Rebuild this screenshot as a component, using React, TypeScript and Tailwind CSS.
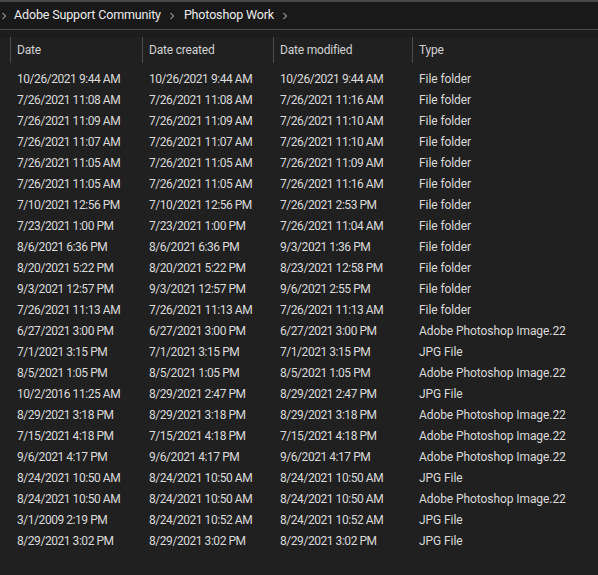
const rows: [string, string, string, string][] = [
  ["10/26/2021 9:44 AM", "10/26/2021 9:44 AM", "10/26/2021 9:44 AM", "File folder"],
  ["7/26/2021 11:08 AM", "7/26/2021 11:08 AM", "7/26/2021 11:16 AM", "File folder"],
  ["7/26/2021 11:09 AM", "7/26/2021 11:09 AM", "7/26/2021 11:10 AM", "File folder"],
  ["7/26/2021 11:07 AM", "7/26/2021 11:07 AM", "7/26/2021 11:10 AM", "File folder"],
  ["7/26/2021 11:05 AM", "7/26/2021 11:05 AM", "7/26/2021 11:09 AM", "File folder"],
  ["7/26/2021 11:05 AM", "7/26/2021 11:05 AM", "7/26/2021 11:16 AM", "File folder"],
  ["7/10/2021 12:56 PM", "7/10/2021 12:56 PM", "7/26/2021 2:53 PM", "File folder"],
  ["7/23/2021 1:00 PM", "7/23/2021 1:00 PM", "7/26/2021 11:04 AM", "File folder"],
  ["8/6/2021 6:36 PM", "8/6/2021 6:36 PM", "9/3/2021 1:36 PM", "File folder"],
  ["8/20/2021 5:22 PM", "8/20/2021 5:22 PM", "8/23/2021 12:58 PM", "File folder"],
  ["9/3/2021 12:57 PM", "9/3/2021 12:57 PM", "9/6/2021 2:55 PM", "File folder"],
  ["7/26/2021 11:13 AM", "7/26/2021 11:13 AM", "7/26/2021 11:13 AM", "File folder"],
  ["6/27/2021 3:00 PM", "6/27/2021 3:00 PM", "6/27/2021 3:00 PM", "Adobe Photoshop Image.22"],
  ["7/1/2021 3:15 PM", "7/1/2021 3:15 PM", "7/1/2021 3:15 PM", "JPG File"],
  ["8/5/2021 1:05 PM", "8/5/2021 1:05 PM", "8/5/2021 1:05 PM", "Adobe Photoshop Image.22"],
  ["10/2/2016 11:25 AM", "8/29/2021 2:47 PM", "8/29/2021 2:47 PM", "JPG File"],
  ["8/29/2021 3:18 PM", "8/29/2021 3:18 PM", "8/29/2021 3:18 PM", "Adobe Photoshop Image.22"],
  ["7/15/2021 4:18 PM", "7/15/2021 4:18 PM", "7/15/2021 4:18 PM", "Adobe Photoshop Image.22"],
  ["9/6/2021 4:17 PM", "9/6/2021 4:17 PM", "9/6/2021 4:17 PM", "Adobe Photoshop Image.22"],
  ["8/24/2021 10:50 AM", "8/24/2021 10:50 AM", "8/24/2021 10:50 AM", "JPG File"],
  ["8/24/2021 10:50 AM", "8/24/2021 10:50 AM", "8/24/2021 10:50 AM", "Adobe Photoshop Image.22"],
  ["3/1/2009 2:19 PM", "8/24/2021 10:52 AM", "8/24/2021 10:52 AM", "JPG File"],
  ["8/29/2021 3:02 PM", "8/29/2021 3:02 PM", "8/29/2021 3:02 PM", "JPG File"],
];

const headers = ["Date", "Date created", "Date modified", "Type"];
const widths = ["w-[132px]", "w-[131px]", "w-[139px]", "w-[170px]"];

const Chevron = () => (
  <svg width="8" height="8" viewBox="0 0 8 8" className="text-[#8c8c8c]">
    <path d="M2.5 1 L5.5 4 L2.5 7" fill="none" stroke="currentColor" strokeWidth="1.1" />
  </svg>
);

export default function App() {
  return (
    <div className="w-[598px] h-[575px] bg-[#202020] text-[#dadada] flex flex-col overflow-hidden font-['Roboto',sans-serif]">
      <div className="h-[2px] bg-[#474747]" />
      <div className="h-[27px] bg-[#191919] flex items-center text-[12.5px] tracking-[-0.15px] text-[#ececec]">
        <span className="w-[14px] flex justify-start"><Chevron /></span>
        <span>Adobe Support Community</span>
        <span className="w-[23px] flex justify-center"><Chevron /></span>
        <span>Photoshop Work</span>
        <span className="w-[23px] flex justify-center"><Chevron /></span>
      </div>
      <div className="h-[1px] bg-[#4a4a4a]" />
      <div className="h-[7px] bg-[#1c1c1c]" />
      <div className="flex h-[26px] pl-[10px] text-[12px] text-[#d2d2d2] tracking-[-0.2px]">
        {headers.map((h, i) => (
          <div key={h} className={`${widths[i]} border-l border-[#4d4d4d] pl-[6px] flex items-center`}>
            {h}
          </div>
        ))}
      </div>
      <div className="flex flex-col pt-[5px] pl-[10px] text-[12px]">
        {rows.map((r, ri) => (
          <div key={ri} className="flex h-[21px] items-center">
            {r.map((c, ci) => (
              <div
                key={ci}
                className={`${widths[ci]} pl-[7px] whitespace-nowrap ${ci < 3 ? "tracking-[-0.45px]" : "tracking-[-0.08px]"}`}
              >
                {c}
              </div>
            ))}
          </div>
        ))}
      </div>
    </div>
  );
}
